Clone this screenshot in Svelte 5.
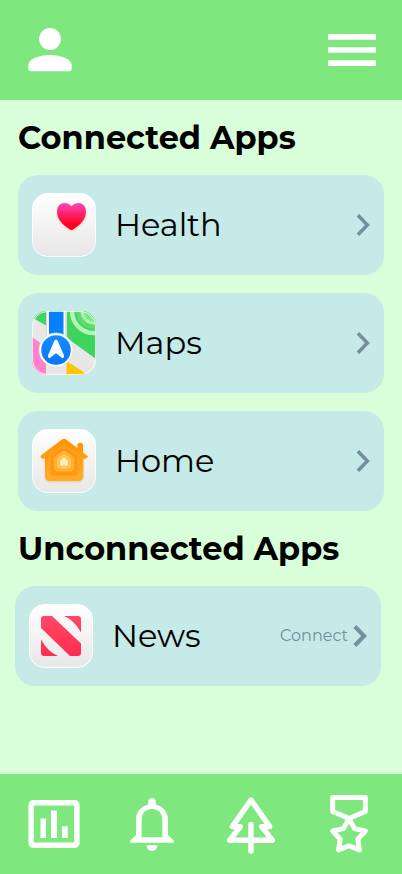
<script>
  const connected = [
    { name: 'Health', icon: 'health' },
    { name: 'Maps', icon: 'maps' },
    { name: 'Home', icon: 'home' }
  ];
  const unconnected = [{ name: 'News', icon: 'news' }];
</script>

{#snippet appIcon(kind)}
  <svg class="app-icon" viewBox="0 0 64 64" width="64" height="64">
    <defs>
      <linearGradient id="tile" x2="0" y2="1"><stop offset="0" stop-color="#fff" /><stop offset="1" stop-color="#e7e7e7" /></linearGradient>
      <linearGradient id="heart" x2="0" y2="1"><stop offset="0" stop-color="#fb46bd" /><stop offset=".75" stop-color="#ff0426" /><stop offset="1" stop-color="#ff0022" /></linearGradient>
      <linearGradient id="blue" x2="0" y2="1"><stop offset="0" stop-color="#168dff" /><stop offset="1" stop-color="#0878f5" /></linearGradient>
      <linearGradient id="house" x2="0" y2="1"><stop offset="0" stop-color="#ff9200" /><stop offset="1" stop-color="#ffac28" /></linearGradient>
      <linearGradient id="red" x2="0" y2="1"><stop offset="0" stop-color="#ff4865" /><stop offset="1" stop-color="#ff2d50" /></linearGradient>
      <clipPath id="round"><rect width="64" height="64" rx="15" /></clipPath>
      <clipPath id="newsbox"><rect x="12" y="12" width="40" height="40" rx="3" /></clipPath>
      <filter id="glow" x="-30%" y="-30%" width="160%" height="160%"><feDropShadow dx="0" dy="1" stdDeviation="1" flood-color="#ff8a40" flood-opacity=".4" /></filter>
    </defs>
    <rect x=".5" y=".5" width="63" height="63" rx="15" fill="url(#tile)" stroke="#fff" />
    {#if kind === 'health'}
      <path filter="url(#glow)" fill="url(#heart)" d="M39.5 13.2C37.4 10.8 34.9 10 32.3 10 28 10 25 13.8 25 18.7 25 26.8 31.8 32.7 38 36.6Q39.5 37.6 41 36.6C47.2 32.7 54 26.8 54 18.7 54 13.8 51 10 46.7 10 44.1 10 41.6 10.8 39.5 13.2Z" />
    {:else if kind === 'maps'}
      <g clip-path="url(#round)">
        <rect width="64" height="64" fill="#e8e7e8" />
        <path fill="#3fd45d" d="M0 4 4 0H14V14.5L1 7ZM35 0H64V48L35 27Z" />
        <circle cx="62" cy="0" r="18" fill="#5edc70" />
        <circle cx="62" cy="0" r="22" fill="none" stroke="#b0f8b4" stroke-width="4.5" />
        <circle cx="62" cy="0" r="12" fill="#7ce787" stroke="#a8f4aa" stroke-width="3" />
        <path fill="#ff80cb" d="M0 26 14 36V64H0Z" />
        <path fill="#ffc500" d="M34.5 64V50L56 64Z" />
        <rect x="15" width="18" height="34" fill="#fff" /><rect x="17" width="14.5" height="34" fill="#087fff" />
        <path d="M14.5 0V34M34 0V34" stroke="#d5d8d8" />
      </g>
      <circle cx="24" cy="39" r="17" fill="#fff" stroke="#d7dbe2" stroke-width=".7" />
      <circle cx="24" cy="39" r="14.8" fill="url(#blue)" />
      <path fill="#f7fbff" d="M22.2 30Q24 27 25.8 30L32 44.500Q32.500 47.800 29.800 46.700L24 42.300 18.200 46.700Q15.500 47.800 16 44.500Z" />
      <rect x=".5" y=".5" width="63" height="63" rx="15" fill="none" stroke="#fff" stroke-opacity=".75" />
    {:else if kind === 'home'}
      <g filter="url(#glow)">
        <path fill="url(#house)" stroke="url(#house)" stroke-width="1" stroke-linejoin="round" d="M9 27 30 11Q32 9.5 34 11L46 20V15.5Q46 14.5 47 14.5H49Q50.5 14.5 50.5 16V24L55.5 27.5 54 29H50.8V47.5Q50.8 51.5 47 51.5H17Q13.5 51.5 13.5 47.5V29H10Z" />
      </g>
      <path fill="#ff9810" stroke="#ffad37" stroke-width=".7" d="M18 25.5 30 17Q32 15.7 34 17L46 25.5V44.5Q46 47 43.5 47H20.5Q18 47 18 44.5Z" />
      <path fill="#ffb02e" stroke="#ffc250" stroke-width=".7" d="M22.7 28.5 30.5 22.8Q32 21.8 33.5 22.8L41.3 28.5V39.5Q41.3 42 39 42H25Q22.7 42 22.7 39.5Z" />
      <path fill="#ffc44f" stroke="#ffd26f" stroke-width=".7" d="M25.7 30 31 26Q32 25.3 33 26L38.3 30V37.3Q38.3 39 36.7 39H27.3Q25.7 39 25.7 37.3Z" />
      <path fill="#ffecb6" d="M28 31.5 31 28.8Q32 28 33 28.8L36 31.5V35.5Q36 36.7 34.8 36.7H29.2Q28 36.7 28 35.5Z" />
    {:else}
      <g clip-path="url(#newsbox)" fill="url(#red)">
        <path d="M12 12H23L52 39.5V52H41L12 24Z" />
        <path d="M35 12H52V28.5Q45.5 16.5 35 12ZM12 35.5Q18.5 47.5 29 52H12Z" />
      </g>
    {/if}
  </svg>
{/snippet}

{#snippet chevron(bold)}
  <svg class="chevron" width="14" height="24" viewBox="0 0 14 24">
    <path d={bold ? 'M1.9 2.5 11.1 12 1.9 21.5' : 'M1.9 2.3 11.4 12 1.9 21.7'} fill="none" stroke="#748e9e" stroke-width={bold ? 4 : 3.5} />
  </svg>
{/snippet}

<div class="screen">
  <header>
    <svg width="44" height="44" viewBox="0 0 44 44" fill="#fff"><circle cx="22" cy="11" r="10.9" /><path d="M.3 37C.3 31.2 11 27 22 27S43.7 31.2 43.7 37V40.5Q43.7 43.3 41 43.3H3Q.3 43.3 .3 40.5Z" /></svg>
    <svg width="48" height="32" viewBox="0 0 48 32" fill="#fff"><path d="M0 0H48V5.7H0ZM0 13.2H48V18.8H0ZM0 26.3H48V32H0Z" /></svg>
  </header>
  <main>
    <h2>Connected Apps</h2>
    <div class="list">
      {#each connected as app}
        <div class="card">
          {@render appIcon(app.icon)}
          <span class="name">{app.name}</span>
          {@render chevron(false)}
        </div>
      {/each}
    </div>
    <h2 class="second">Unconnected Apps</h2>
    <div class="list shifted">
      {#each unconnected as app}
        <div class="card">
          {@render appIcon(app.icon)}
          <span class="name">{app.name}</span>
          <span class="connect">Connect</span>
          {@render chevron(true)}
        </div>
      {/each}
    </div>
  </main>
  <nav>
    <svg width="52" height="60" viewBox="28 794 52 60"><rect x="31.1" y="802.7" width="45.8" height="42.6" rx="2.3" fill="none" stroke="#fff" stroke-width="5.4" /><path fill="#fff" d="M40.5 818.5H46V838H40.5ZM51 810.5H57V838H51ZM62 826.3H67.7V838H62Z" /></svg>
    <svg class="bell" width="44" height="60" viewBox="130 794 44 60"><path fill="#fff" fill-rule="evenodd" d="M148 804.6V803Q148 798.3 152 798.3T156 803V804.6C163.5 806.5 168 812.5 168 820V835L173.7 840.5V842.7H130.3V840.5L136 835V820C136 812.5 140.5 806.5 148 804.6ZM141.6 837.3H162.4V820C162.4 813.5 158.5 809 152 809S141.6 813.5 141.6 820ZM146.5 845.2H157.5Q157 850.8 152 850.8T146.5 845.2Z" /></svg>
    <svg class="tree" width="50" height="60" viewBox="226 794 50 60" fill="none" stroke="#fff" stroke-width="5.4" stroke-linecap="round" stroke-linejoin="round"><path d="M251 800 232.3 826.6H240.3L229.7 840.2H272.3L261.7 826.6H269.7ZM251 824.5V851" /></svg>
    <svg width="40" height="60" viewBox="329 794 40 60" fill="none" stroke="#fff" stroke-width="5" stroke-linejoin="round"><path d="M332.7 797.5H365.3V811.5L349 818.5 332.7 811.5ZM349 818.5 354.5 828.6 365.3 831 357.9 839.2 359.4 850 349 845.7 338.6 850 340.1 839.2 332.7 831 343.5 828.6Z" /></svg>
  </nav>
</div>

<style>
  :global(body) { margin: 0; }
  .screen { display: flex; flex-direction: column; width: 402px; height: 874px; background: #d8ffd9; font-family: Montserrat, Inter, sans-serif; color: #000; white-space: nowrap; overflow: hidden; }
  svg { display: block; flex: none; }
  header { display: flex; align-items: center; justify-content: space-between; height: 100px; padding: 0 26px 0 28px; background: #7ee77e; box-sizing: border-box; }
  main { flex: 1; padding: 18px 18px 0; }
  h2 { margin: 0; height: 57px; font-size: 32px; line-height: 40px; font-weight: 700; }
  h2.second { padding-top: 18px; }
  .list { display: flex; flex-direction: column; gap: 18px; }
  .shifted { margin: 0 3px 0 -3px; }
  .card { display: flex; align-items: center; height: 100px; padding: 0 14px; border-radius: 20px; background: #c6eae7; box-sizing: border-box; }
  .name { flex: 1; margin-left: 19px; font-size: 32px; line-height: 40px; font-weight: 400; }
  .connect { margin-right: 5px; font-size: 16px; line-height: 20px; font-weight: 400; color: #748e9e; }
  nav { display: flex; align-items: center; justify-content: space-between; height: 100px; padding: 0 33px 0 28px; background: #7ee77e; box-sizing: border-box; }
  .bell { margin: 0 2px 0 -2px; }
  .tree { margin: 0 1px 0 -1px; }
</style>
